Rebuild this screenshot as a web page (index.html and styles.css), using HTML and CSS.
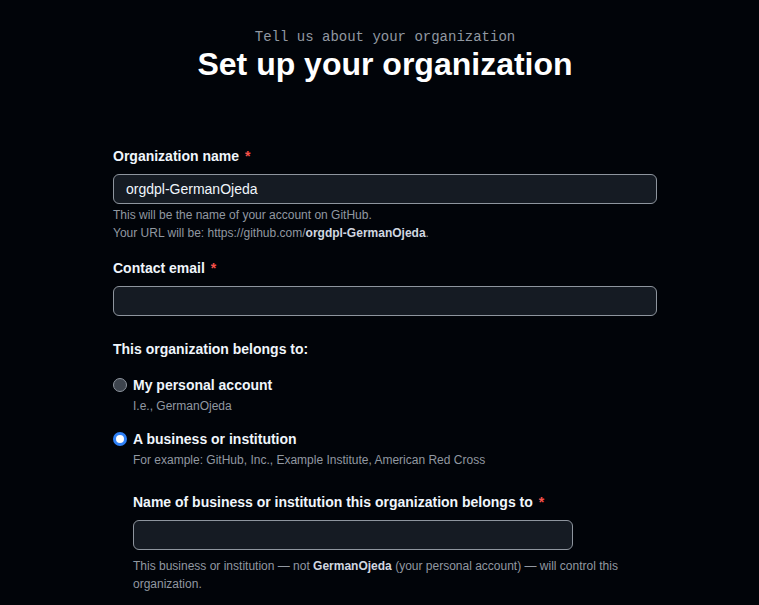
FILE: index.html
```html
<!DOCTYPE html>
<html>
<head>
<meta charset="utf-8">
<link rel="stylesheet" href="styles.css">
</head>
<body>
<div class="page">
  <header class="hero">
    <p class="eyebrow">Tell us about your organization</p>
    <h1 class="title">Set up your organization</h1>
  </header>
  <form class="form">
    <div class="field">
      <label class="label">Organization name <span class="req">*</span></label>
      <input class="input" type="text" value="orgdpl-GermanOjeda">
      <p class="note">This will be the name of your account on GitHub.<br>Your URL will be: https://github.com/<strong>orgdpl-GermanOjeda</strong>.</p>
    </div>
    <div class="field">
      <label class="label">Contact email <span class="req">*</span></label>
      <input class="input" type="text">
    </div>
    <div class="group">
      <p class="label">This organization belongs to:</p>
      <div class="radios">
        <label class="radio-row">
          <span class="radio"></span>
          <span class="radio-text">
            <span class="radio-title">My personal account</span>
            <span class="note">I.e., GermanOjeda</span>
          </span>
        </label>
        <label class="radio-row">
          <span class="radio checked"></span>
          <span class="radio-text">
            <span class="radio-title">A business or institution</span>
            <span class="note">For example: GitHub, Inc., Example Institute, American Red Cross</span>
          </span>
        </label>
      </div>
      <div class="nested">
        <label class="label">Name of business or institution this organization belongs to <span class="req">*</span></label>
        <input class="input input-narrow" type="text">
        <p class="note">This business or institution — not <strong>GermanOjeda</strong> (your personal account) — will control this organization.</p>
      </div>
    </div>
  </form>
</div>
</body>
</html>
```
FILE: styles.css
```css
* { box-sizing: border-box; }
html, body {
  margin: 0;
  background: #010409;
  color: #e6edf3;
  font-family: "Liberation Sans", Arial, sans-serif;
}
.page {
  width: 544px;
  margin-left: 113px;
}
.hero {
  text-align: center;
  padding-top: 28px;
}
.eyebrow {
  margin: 0;
  font-family: "Liberation Mono", monospace;
  font-size: 14px;
  line-height: 18px;
  color: #9198a1;
}
.title {
  margin: 0;
  font-size: 32px;
  line-height: 37px;
  font-weight: 700;
  color: #ffffff;
}
.form {
  padding-top: 63px;
}
.field {
  margin-bottom: 16px;
}
.label {
  display: block;
  margin: 0 0 8px;
  font-size: 14px;
  line-height: 20px;
  font-weight: 700;
  color: #f0f6fc;
}
.req {
  color: #f85149;
  margin-left: 2px;
}
.input {
  display: block;
  width: 100%;
  height: 30px;
  margin: 0;
  padding: 0 12px;
  background: #151b23;
  border: 1px solid #8e959e;
  border-radius: 6px;
  color: #f0f6fc;
  font-family: "Liberation Sans", Arial, sans-serif;
  font-size: 14px;
  outline: none;
}
.input-narrow {
  width: 440px;
}
.note {
  display: block;
  margin: 2px 0 0;
  font-size: 12px;
  line-height: 18px;
  color: #9198a1;
}
.note strong {
  color: #d1d7e0;
  font-weight: 700;
}
.group {
  padding-top: 7px;
}
.group > .label {
  margin-bottom: 16px;
}
.radios {
  display: flex;
  flex-direction: column;
  gap: 14px;
}
.radio-row {
  display: flex;
  align-items: flex-start;
  gap: 6px;
}
.radio {
  flex: none;
  width: 14px;
  height: 14px;
  margin-top: 3px;
  border-radius: 50%;
  border: 1px solid #8e959e;
  background: #3d444d;
}
.radio.checked {
  border: 3.5px solid #2f81f7;
  background: #ffffff;
}
.radio-text {
  display: flex;
  flex-direction: column;
}
.radio-title {
  font-size: 14px;
  line-height: 20px;
  font-weight: 700;
  color: #f0f6fc;
}
.radio-text .note {
  margin-top: 2px;
}
.nested {
  padding-left: 20px;
  padding-top: 23px;
}
.nested .label {
  margin-bottom: 8px;
}
.nested .note {
  margin-top: 7px;
}
```
